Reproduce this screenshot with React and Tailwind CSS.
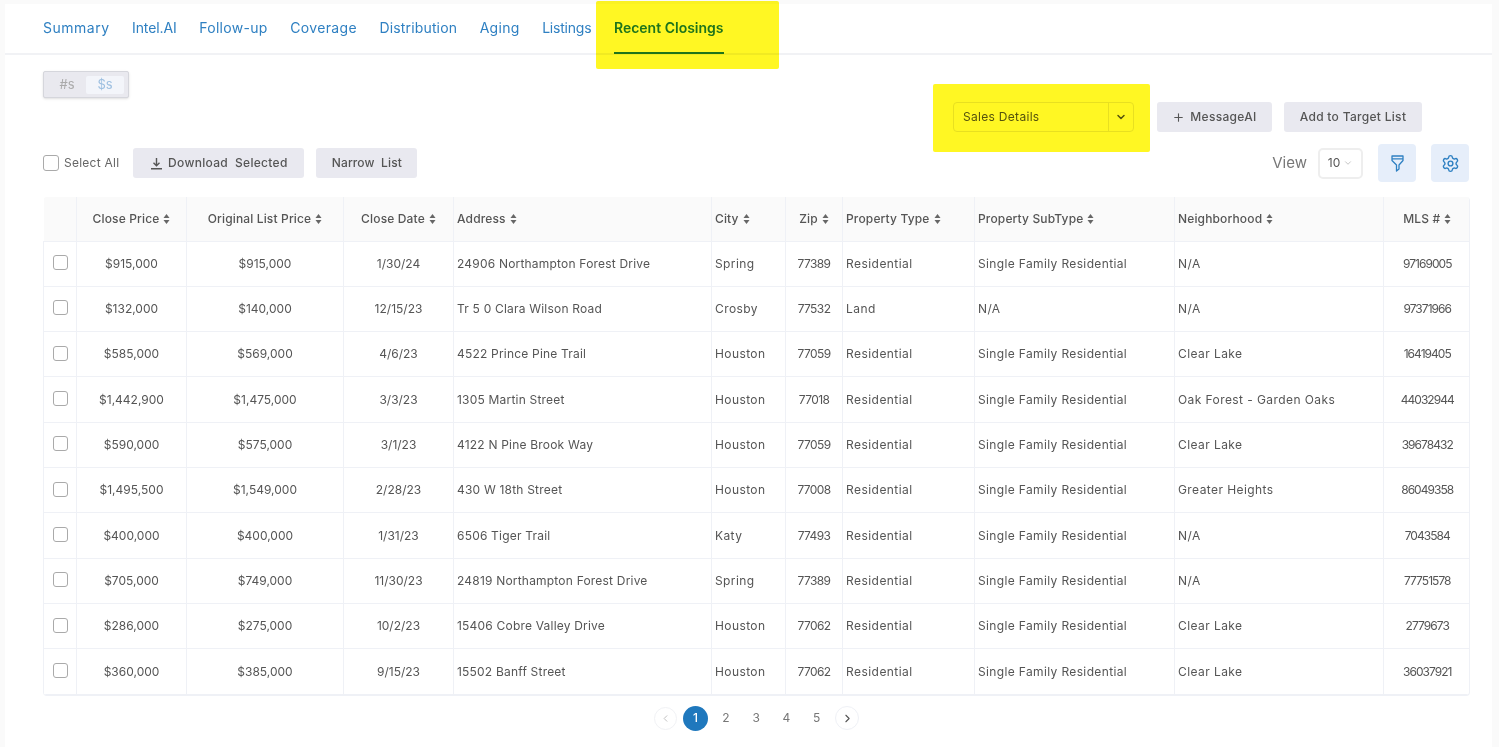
import React from "react";
import { ChevronDown, ChevronLeft, ChevronRight, Plus, Settings } from "lucide-react";

const tabs = [
  { label: "Summary", spacing: "tracking-[0.5px]" },
  { label: "Intel.AI", spacing: "tracking-[-0.1px]" },
  { label: "Follow-up", spacing: "tracking-[0.3px]" },
  { label: "Coverage", spacing: "tracking-[0.35px]" },
  { label: "Distribution", spacing: "tracking-[0.15px]" },
  { label: "Aging", spacing: "tracking-[0.3px]" },
  { label: "Listings", spacing: "tracking-[-0.2px]" },
];

const columns = [
  { label: "Close Price", width: "w-[110px]", center: true, cell: "" },
  { label: "Original List Price", width: "w-[157px]", center: true, cell: "" },
  { label: "Close Date", width: "w-[110px]", center: true, cell: "" },
  { label: "Address", width: "w-[258px]", cell: "tracking-[0.2px]" },
  { label: "City", width: "w-[74px]", cell: "tracking-[0.4px]" },
  { label: "Zip", width: "w-[57px]", center: true, cell: "tracking-[-0.6px]" },
  { label: "Property Type", width: "w-[132px]", cell: "tracking-[0.45px]" },
  { label: "Property SubType", width: "w-[200px]", cell: "tracking-[0.36px]" },
  { label: "Neighborhood", width: "w-[209px]", cell: "tracking-[0.42px]" },
  { label: "MLS #", width: "w-[87px]", center: true, cell: "tracking-[-0.95px]" },
];

const rows = [
  ["$915,000", "$915,000", "1/30/24", "24906 Northampton Forest Drive", "Spring", "77389", "Residential", "Single Family Residential", "N/A", "97169005"],
  ["$132,000", "$140,000", "12/15/23", "Tr 5 0 Clara Wilson Road", "Crosby", "77532", "Land", "N/A", "N/A", "97371966"],
  ["$585,000", "$569,000", "4/6/23", "4522 Prince Pine Trail", "Houston", "77059", "Residential", "Single Family Residential", "Clear Lake", "16419405"],
  ["$1,442,900", "$1,475,000", "3/3/23", "1305 Martin Street", "Houston", "77018", "Residential", "Single Family Residential", "Oak Forest - Garden Oaks", "44032944"],
  ["$590,000", "$575,000", "3/1/23", "4122 N Pine Brook Way", "Houston", "77059", "Residential", "Single Family Residential", "Clear Lake", "39678432"],
  ["$1,495,500", "$1,549,000", "2/28/23", "430 W 18th Street", "Houston", "77008", "Residential", "Single Family Residential", "Greater Heights", "86049358"],
  ["$400,000", "$400,000", "1/31/23", "6506 Tiger Trail", "Katy", "77493", "Residential", "Single Family Residential", "N/A", "7043584"],
  ["$705,000", "$749,000", "11/30/23", "24819 Northampton Forest Drive", "Spring", "77389", "Residential", "Single Family Residential", "N/A", "77751578"],
  ["$286,000", "$275,000", "10/2/23", "15406 Cobre Valley Drive", "Houston", "77062", "Residential", "Single Family Residential", "Clear Lake", "2779673"],
  ["$360,000", "$385,000", "9/15/23", "15502 Banff Street", "Houston", "77062", "Residential", "Single Family Residential", "Clear Lake", "36037921"],
];

const SortIcon = () => (
  <svg width="7" height="10" viewBox="0 0 7 10" className="inline-block ml-[4px] align-[-1px]" fill="#666">
    <path d="M3.5 0 L6.5 4 H0.5 Z" />
    <path d="M3.5 10 L6.5 6 H0.5 Z" />
  </svg>
);

const App = () => {
  return (
    <div className="relative h-[747px] w-[1499px] overflow-hidden bg-[#fafafa] pl-[5px] pr-[7px] pt-[4px] text-[#555] font-['Inter','Liberation_Sans',sans-serif]">
      <div className="h-[743px] bg-white">
        {/* Tabs */}
        <div className="flex h-[51px] gap-[22.5px] border-b-2 border-[#f1f2f5] pl-[38px]">
          {tabs.map((tab) => (
            <div key={tab.label} className={`pt-[14px] text-[14px] leading-[20px] text-[#2f80c2] ${tab.spacing}`}>
              {tab.label}
            </div>
          ))}
          <div className="h-[51px] pt-[14px] text-[14px] font-semibold leading-[20px] text-[#1f78bd]">
            <div className="h-[36px] border-b-2 border-[#1f78bd]">Recent Closings</div>
          </div>
        </div>

        {/* Toolbar */}
        <div className="flex justify-between pl-[38px] pr-[23px]">
          <div className="flex flex-col">
            <div className="mt-[16px] flex h-[27px] w-[86px] items-center rounded-[2px] border border-[#d5d6dc] bg-[#e9e9ef] p-[4px] text-[13px] shadow-sm">
              <div className="flex-1 text-center text-[#aaa]">#s</div>
              <div className="flex h-[18px] flex-1 items-center justify-center rounded-[2px] bg-[#f3f5fa] text-[#9dbfe0]">$s</div>
            </div>
            <div className="mt-[50px] flex items-center">
              <input type="checkbox" className="h-[16px] w-[16px] appearance-none rounded-[3px] border border-[#aaa] bg-white" />
              <span className="ml-[5px] text-[12px] tracking-[0.25px] text-[#666]">Select All</span>
              <button className="ml-[14px] flex h-[30px] w-[171px] items-center justify-center rounded-[3px] bg-[#e9e9f0] text-[12px] font-medium tracking-[0.3px] text-[#555]">
                <svg width="13" height="13" viewBox="0 0 13 13" className="mr-[5px]" fill="none" stroke="#555" strokeWidth="1.4">
                  <path d="M6.5 1 V8.5 M3.5 5.8 L6.5 8.8 L9.5 5.8 M1 11.8 H12" />
                </svg>
                Download&nbsp; Selected
              </button>
              <button className="ml-[12px] h-[30px] w-[101px] rounded-[3px] bg-[#e9e9f0] text-[12px] font-medium tracking-[0.1px] text-[#555]">
                Narrow&nbsp; List
              </button>
            </div>
          </div>

          <div className="flex flex-col items-end">
            <div className="mt-[47px] flex items-center pr-[47px]">
              <div className="flex h-[30px] w-[181px] items-center rounded-[4px] border border-[#e8e8e8] text-[12px] tracking-[0.3px] text-[#555]">
                <span className="flex-1 pl-[9px]">Sales Details</span>
                <span className="flex h-full w-[25px] items-center justify-center border-l border-[#e8e8e8]">
                  <ChevronDown size={12} strokeWidth={3} />
                </span>
              </div>
              <button className="ml-[23px] flex h-[30px] w-[115px] items-center justify-center rounded-[3px] bg-[#e9e9f0] text-[12px] font-medium tracking-[0.3px] text-[#555]">
                <Plus size={13} strokeWidth={2} className="mr-[5px]" />
                MessageAI
              </button>
              <button className="ml-[12px] h-[30px] w-[138px] rounded-[3px] bg-[#e9e9f0] text-[12px] font-medium tracking-[0.3px] text-[#555]">
                Add to Target List
              </button>
            </div>
            <div className="mt-[12px] flex items-center">
              <span className="text-[15px] text-[#777]">View</span>
              <div className="ml-[11px] flex h-[31px] w-[45px] items-center justify-center rounded-[5px] border-2 border-[#eeeeee] text-[12px]">
                10
                <ChevronDown size={10} className="ml-[3px] text-[#bbb]" />
              </div>
              <div className="ml-[15px] flex h-[38px] w-[38px] items-center justify-center rounded-[4px] bg-[#e6eefa]">
                <svg width="13" height="17" viewBox="0 0 13 17" fill="none" stroke="#2f80c2" strokeWidth="1.3" strokeLinejoin="round">
                  <path d="M1 1 H12 V5.5 L8 10 V14 L5.5 16 V10 L1 5.5 Z M1 3.8 H12" />
                </svg>
              </div>
              <div className="ml-[15px] flex h-[38px] w-[38px] items-center justify-center rounded-[4px] bg-[#e6eefa]">
                <Settings size={19} strokeWidth={1.8} className="text-[#2f80c2]" />
              </div>
            </div>
          </div>
        </div>

        {/* Table */}
        <div className="ml-[38px] mt-[15px] w-[1427px] overflow-hidden rounded-[4px] border-b border-r border-[#eff1f6]">
          <table className="w-full table-fixed border-collapse text-[12px]">
            <colgroup>
              <col className="w-[33px]" />
              {columns.map((c) => (
                <col key={c.label} className={c.width} />
              ))}
            </colgroup>
            <thead>
              <tr className="h-[44px] border-b border-[#eff1f6] bg-[#fafafa]">
                <th className="border-r border-[#eff1f6]" />
                {columns.map((c, i) => (
                  <th
                    key={c.label}
                    className={`px-[3px] font-medium tracking-[0.15px] text-[#555] ${c.center ? "text-center" : "text-left"} ${i < columns.length - 1 ? "border-r border-[#eff1f6]" : ""}`}
                  >
                    {c.label}
                    <SortIcon />
                  </th>
                ))}
              </tr>
            </thead>
            <tbody>
              {rows.map((row) => (
                <tr key={row[3]} className="h-[45.33px] border-b border-[#eff1f6]">
                  <td className="border-l border-r border-[#eff1f6]">
                    <div className="mb-[2px] ml-[9px] h-[15px] w-[15px] rounded-[3px] border border-[#aaa] bg-white" />
                  </td>
                  {row.map((v, i) => (
                    <td
                      key={i}
                      className={`px-[3px] text-[#555] ${columns[i].cell} ${columns[i].center ? "text-center" : "text-left"} ${i < row.length - 1 ? "border-r border-[#eff1f6]" : ""}`}
                    >
                      {v}
                    </td>
                  ))}
                </tr>
              ))}
            </tbody>
          </table>
        </div>

        {/* Pagination */}
        <div className="ml-[649px] mt-[10px] flex items-center text-[12px] text-[#777]">
          <span className="flex h-[23px] w-[23px] items-center justify-center rounded-full border border-[#f1f2f5] text-[#bbb]">
            <ChevronLeft size={11} />
          </span>
          <span className="ml-[6px] flex h-[25px] w-[25px] items-center justify-center rounded-full bg-[#1f78bd] font-medium text-white">1</span>
          {[2, 3, 4, 5].map((n) => (
            <span key={n} className="ml-[5.3px] flex h-[25px] w-[25px] items-center justify-center">
              {n}
            </span>
          ))}
          <span className="ml-[6px] flex h-[24px] w-[24px] items-center justify-center rounded-full border border-[#eff1f6] text-[#555]">
            <ChevronRight size={13} />
          </span>
        </div>
      </div>

      {/* Yellow highlighter marks laid over the page */}
      <div className="absolute left-[596px] top-[1px] h-[68px] w-[183px] rounded-[2px] bg-[#fff723] mix-blend-multiply" />
      <div className="absolute left-[933px] top-[84px] h-[68px] w-[217px] rounded-[2px] bg-[#fff723] mix-blend-multiply" />
    </div>
  );
};

export default App;
